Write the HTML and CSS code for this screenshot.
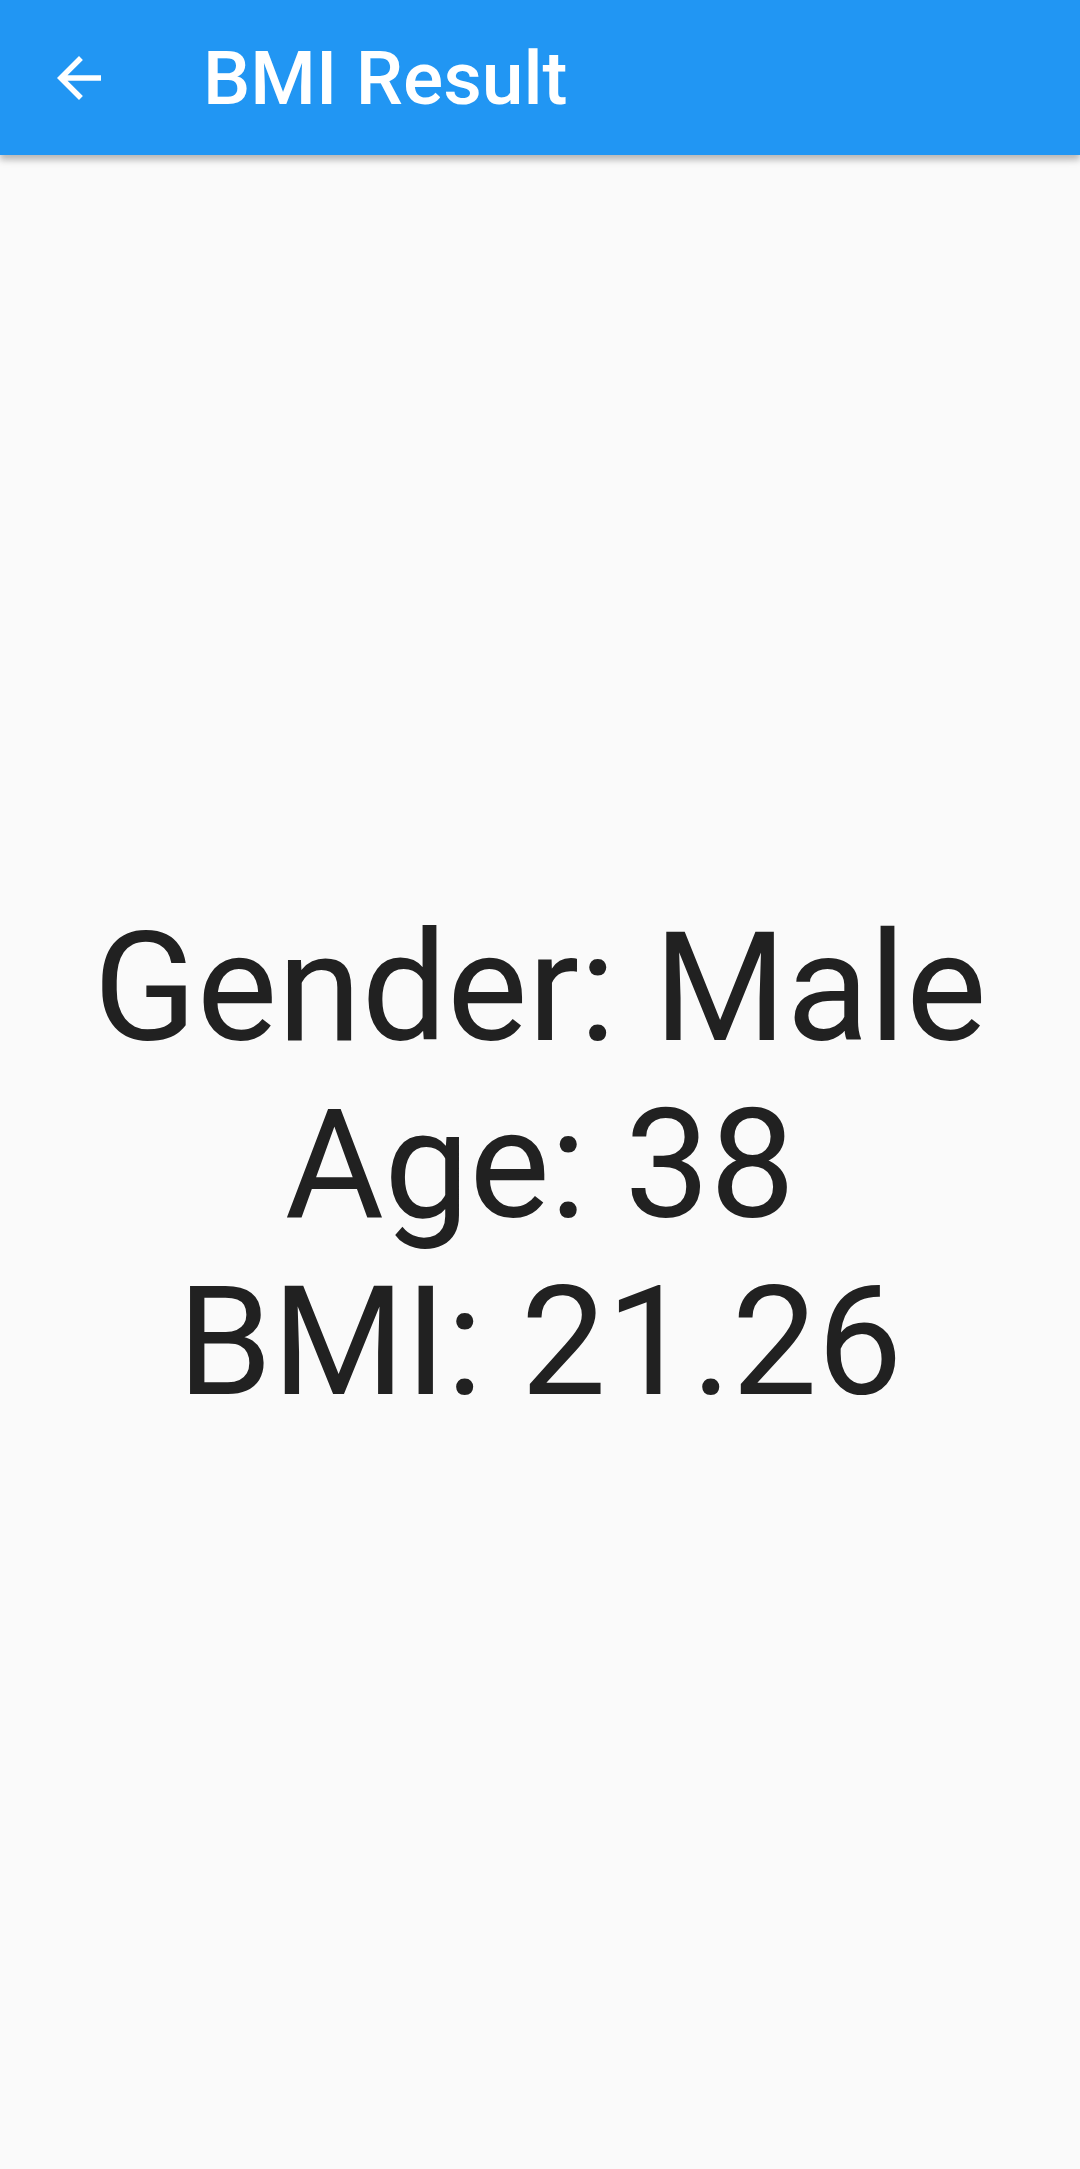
FILE: index.html
```html
<!DOCTYPE html>
<html>
<head>
<meta charset="utf-8">
<link rel="stylesheet" href="styles.css">
</head>
<body>
<div class="screen">
  <header class="appbar">
    <div class="back">
      <svg viewBox="0 0 24 24" width="66" height="66"><path fill="#fff" d="M20 11H7.83l5.59-5.59L12 4l-8 8 8 8 1.41-1.41L7.83 13H20v-2z"/></svg>
    </div>
    <div class="title">BMI Result</div>
  </header>
  <main class="content">
    <div class="result">
      <div>Gender: Male</div>
      <div>Age: 38</div>
      <div>BMI: 21.26</div>
    </div>
  </main>
</div>
</body>
</html>
```
FILE: styles.css
```css
html, body {
  margin: 0;
  padding: 0;
  background: #fafafa;
}
.screen {
  width: 1080px;
  height: 2169px;
  display: flex;
  flex-direction: column;
  background: #fafafa;
  font-family: Roboto, "Noto Sans", sans-serif;
}
.appbar {
  height: 155px;
  flex: none;
  background: #2196f3;
  display: flex;
  align-items: center;
  box-shadow: 0 5px 6px rgba(0,0,0,0.2), 0 2px 12px rgba(0,0,0,0.12);
  position: relative;
  z-index: 1;
}
.back {
  width: 66px;
  height: 66px;
  margin-left: 46px;
  display: flex;
}
.title {
  margin-left: 91px;
  color: #fff;
  font-size: 75px;
  font-weight: 500;
  line-height: 1;
  padding-top: 2px;
}
.content {
  flex: 1;
  display: flex;
  align-items: center;
  justify-content: center;
  padding-top: 6px;
}
.result {
  text-align: center;
  color: #212121;
  font-size: 152px;
  line-height: 177px;
  font-weight: 400;
}
```
